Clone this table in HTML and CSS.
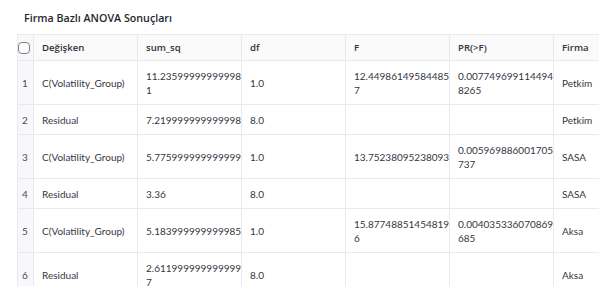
FILE: index.html
```html
<!DOCTYPE html>
<html lang="tr">
<head>
<meta charset="utf-8">
<title>Firma Bazlı ANOVA Sonuçları</title>
<link rel="stylesheet" href="styles.css">
</head>
<body>
<div class="page">
  <h3 class="title">Firma Bazlı ANOVA Sonuçları</h3>
  <table class="grid">
    <colgroup>
      <col class="c-idx"><col class="c-w"><col class="c-w"><col class="c-w"><col class="c-w"><col class="c-w"><col class="c-w">
    </colgroup>
    <thead>
      <tr>
        <th class="idx"><span class="check"></span></th>
        <th>Değişken</th>
        <th>sum_sq</th>
        <th>df</th>
        <th>F</th>
        <th>PR(&gt;F)</th>
        <th>Firma</th>
      </tr>
    </thead>
    <tbody>
      <tr>
        <td class="idx">1</td>
        <td>C(Volatility_Group)</td>
        <td>11.23599999999998<br>1</td>
        <td>1.0</td>
        <td>12.44986149584485<br>7</td>
        <td>0.007749699114494<br>8265</td>
        <td>Petkim</td>
      </tr>
      <tr>
        <td class="idx">2</td>
        <td>Residual</td>
        <td>7.219999999999998</td>
        <td>8.0</td>
        <td></td>
        <td></td>
        <td>Petkim</td>
      </tr>
      <tr>
        <td class="idx">3</td>
        <td>C(Volatility_Group)</td>
        <td>5.775999999999999</td>
        <td>1.0</td>
        <td>13.75238095238093</td>
        <td>0.005969886001705<br>737</td>
        <td>SASA</td>
      </tr>
      <tr>
        <td class="idx">4</td>
        <td>Residual</td>
        <td>3.36</td>
        <td>8.0</td>
        <td></td>
        <td></td>
        <td>SASA</td>
      </tr>
      <tr>
        <td class="idx">5</td>
        <td>C(Volatility_Group)</td>
        <td>5.183999999999985</td>
        <td>1.0</td>
        <td>15.87748851454819<br>6</td>
        <td>0.004035336070869<br>685</td>
        <td>Aksa</td>
      </tr>
      <tr>
        <td class="idx">6</td>
        <td>Residual</td>
        <td>2.611999999999999<br>7</td>
        <td>8.0</td>
        <td></td>
        <td></td>
        <td>Aksa</td>
      </tr>
    </tbody>
  </table>
</div>
</body>
</html>
```
FILE: styles.css
```css
html, body {
  margin: 0;
  padding: 0;
  background: #ffffff;
  overflow: hidden;
}

.page {
  width: 599px;
  height: 286px;
  overflow: hidden;
  font-family: Lato, "Open Sans", sans-serif;
  color: #31333f;
}

.title {
  margin: 0;
  padding: 11px 0 0 24px;
  height: 15px;
  line-height: 15px;
  font-family: "Open Sans", Lato, sans-serif;
  font-size: 10.7px;
  font-weight: 600;
  color: #262730;
}

.grid {
  margin: 8px 0 0 17px;
  border-collapse: collapse;
  table-layout: fixed;
  width: 640px;
  font-size: 10px;
  line-height: 14px;
}

.c-idx { width: 16px; }
.c-w { width: 104px; }

.grid th,
.grid td {
  border: 1px solid #e9e9ec;
  padding: 7.5px 8px;
  text-align: left;
  vertical-align: middle;
  white-space: nowrap;
  overflow: visible;
}

.grid th {
  padding: 5.5px 8px;
  font-family: "Open Sans", Lato, sans-serif;
  font-size: 9.6px;
  font-weight: 600;
  color: #31333f;
  background: #fafafb;
}

.grid td {
  color: #35363f;
}

.grid .idx {
  background: #f8f8fa;
  padding-left: 4px;
  padding-right: 0;
  color: #4a4b55;
}

.grid th.idx {
  padding: 0;
}

.check {
  display: block;
  width: 10px;
  height: 10px;
  border: 1.3px solid #7d7f86;
  border-radius: 4px;
  background: #ffffff;
}
```
